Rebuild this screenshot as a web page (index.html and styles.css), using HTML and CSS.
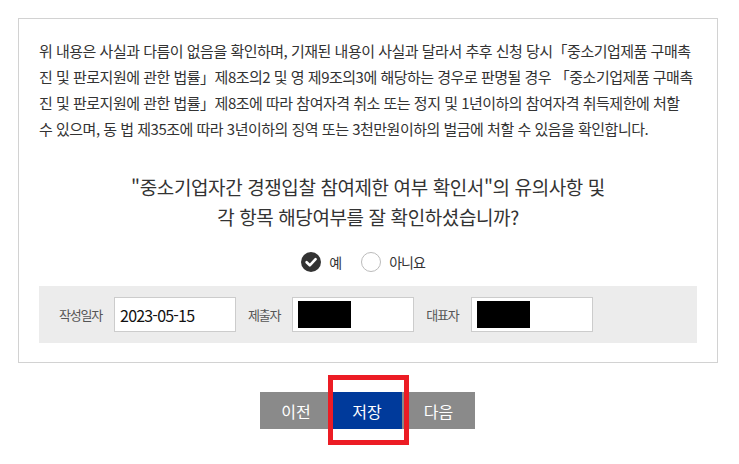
FILE: index.html
```html
<!DOCTYPE html>
<html lang="ko">
<head>
    <meta charset="UTF-8">
    <meta name="viewport" content="width=device-width, initial-scale=1.0">
    <title>중소기업자간 경쟁입찰 참여제한 여부 확인서</title>
    <link rel="stylesheet" href="styles.css">
</head>
<body>
    <div class="confirm-box">
        <p class="notice">위 내용은 사실과 다름이 없음을 확인하며, 기재된 내용이 사실과 달라서 추후 신청 당시「중소기업제품 구매촉진 및 판로지원에 관한 법률」제8조의2 및 영 제9조의3에 해당하는 경우로 판명될 경우 「중소기업제품 구매촉진 및 판로지원에 관한 법률」제8조에 따라 참여자격 취소 또는 정지 및 1년이하의 참여자격 취득제한에 처할 <span class="nowrap">수 있으며,</span> 동 법 제35조에 따라 3년이하의 징역 또는 3천만원이하의 벌금에 처할 수 있음을 확인합니다.</p>

        <h2 class="question">"중소기업자간 경쟁입찰 참여제한 여부 확인서"의 유의사항 및<br>각 항목 해당여부를 잘 확인하셨습니까?</h2>

        <div class="choice">
            <label class="radio checked">
                <span class="mark">
                    <svg width="20" height="20" viewBox="0 0 20 20">
                        <circle cx="10" cy="10" r="10" fill="#333"/>
                        <path d="M5.6 10.2 L8.8 13.3 L14.6 7.2" fill="none" stroke="#fff" stroke-width="2.6" stroke-linecap="round" stroke-linejoin="round"/>
                    </svg>
                </span>
                예
            </label>
            <label class="radio">
                <span class="mark">
                    <svg width="20" height="20" viewBox="0 0 20 20">
                        <circle cx="10" cy="10" r="9.5" fill="#fff" stroke="#bbb" stroke-width="1"/>
                    </svg>
                </span>
                아니요
            </label>
        </div>

        <div class="sign-row">
            <span class="field-label">작성일자</span>
            <div class="field">2023-05-15</div>
            <span class="field-label">제출자</span>
            <div class="field"><span class="masked"></span></div>
            <span class="field-label">대표자</span>
            <div class="field"><span class="masked"></span></div>
        </div>
    </div>

    <div class="buttons">
        <button class="btn">이전</button>
        <button class="btn primary">저장<span class="highlight"></span></button>
        <button class="btn last">다음</button>
    </div>
</body>
</html>
```

FILE: styles.css
```css
body {
    margin: 0;
    padding: 18px;
    font-family: "Noto Sans CJK KR", "Noto Sans", sans-serif;
    color: #333;
    background-color: #fff;
}

.confirm-box {
    width: 658px;
    border: 1px solid #d2d2d2;
    padding: 19px 20px 19px;
}

.notice {
    margin: 0;
    font-size: 15px;
    line-height: 26px;
    letter-spacing: -0.5px;
    color: #333;
}

.nowrap {
    white-space: nowrap;
}

.question {
    margin: 30px 0 0;
    font-size: 19px;
    font-weight: normal;
    line-height: 30px;
    letter-spacing: -0.4px;
    text-align: center;
    color: #333;
}

.choice {
    margin-top: 20px;
    display: flex;
    justify-content: center;
    gap: 20px;
    padding-right: 10px;
}

.radio {
    display: flex;
    align-items: center;
    gap: 8px;
    font-size: 14px;
    line-height: 20px;
    letter-spacing: -1px;
    color: #333;
}

.mark {
    display: flex;
}

.sign-row {
    margin-top: 14px;
    height: 57px;
    background-color: #ececec;
    display: flex;
    align-items: center;
    padding: 0 20px;
    gap: 12px;
}

.field-label {
    font-size: 13px;
    color: #555;
    letter-spacing: -1.2px;
}

.field {
    width: 112px;
    height: 33px;
    border: 1px solid #ccc;
    background-color: #fff;
    padding: 0 3px 0 5px;
    display: flex;
    align-items: center;
    font-size: 16px;
    letter-spacing: -0.8px;
    color: #111;
}

.masked {
    display: block;
    width: 53px;
    height: 27px;
    background-color: #000;
}

.buttons {
    margin-top: 29px;
    display: flex;
    justify-content: center;
    padding-right: 4px;
}

.btn {
    width: 72px;
    height: 37px;
    border: none;
    background-color: #8a8a8a;
    color: #fff;
    font-family: "Noto Sans CJK KR", sans-serif;
    font-size: 16px;
    padding: 0;
    cursor: pointer;
}

.btn.last {
    width: 73px;
}

.btn.primary {
    width: 70px;
    background-color: #003a9b;
    position: relative;
}

.highlight {
    position: absolute;
    left: -4px;
    top: -17px;
    width: 71px;
    height: 60px;
    border: 5px solid #ec1c24;
}
```
